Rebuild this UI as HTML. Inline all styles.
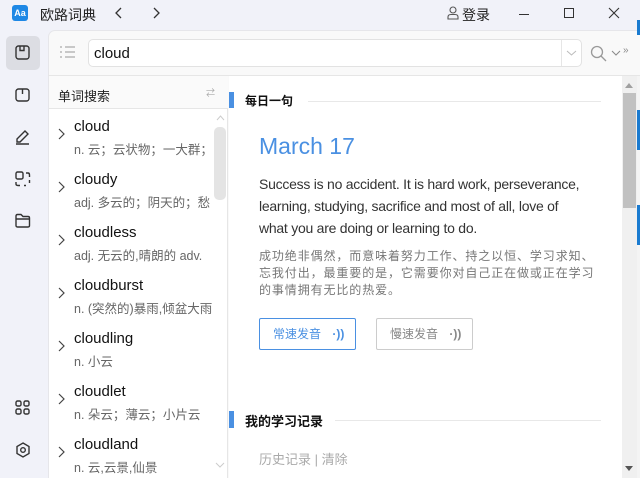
<!DOCTYPE html>
<html><head><meta charset="utf-8"><style>
*{margin:0;padding:0;box-sizing:border-box}
body{width:640px;height:478px;overflow:hidden;background:#f1f2f9;font-family:"Liberation Sans","Noto Sans CJK SC",sans-serif;position:relative;color:#222}
.a{position:absolute}
.t{white-space:nowrap}
svg{position:absolute;overflow:visible}
</style></head><body>
<div class="a" style="left:12px;top:5px;width:16px;height:16px;border-radius:3px;background:#1e88e5;color:#fff;font-size:9px;font-weight:bold;line-height:16px;text-align:center">Aa</div>
<div class="a t" style="left:40px;top:5px;font-size:14px;color:#222">欧路词典</div>
<svg style="left:114px;top:7px" width="10" height="12"><path d="M7 1L2 6L7 11" fill="none" stroke="#333" stroke-width="1.3"/></svg>
<svg style="left:152px;top:7px" width="10" height="12"><path d="M2 1L7 6L2 11" fill="none" stroke="#333" stroke-width="1.3"/></svg>
<svg style="left:447px;top:6px" width="12" height="14"><circle cx="6" cy="4" r="3" fill="none" stroke="#555" stroke-width="1.1"/><path d="M1 13V11Q1 8.5 4 8.5H8Q11 8.5 11 11V13Z" fill="none" stroke="#555" stroke-width="1.1"/></svg>
<div class="a t" style="left:462px;top:5px;font-size:14px;color:#222">登录</div>
<div class="a" style="left:519px;top:14px;width:10px;height:1px;background:#333"></div>
<div class="a" style="left:564px;top:8px;width:10px;height:10px;border:1px solid #333"></div>
<svg style="left:609px;top:8px" width="10" height="10"><path d="M0 0L10 10M10 0L0 10" stroke="#333" stroke-width="1.1"/></svg>
<div class="a" style="left:6px;top:36px;width:34px;height:34px;border-radius:5px;background:#dcdde3"></div>
<svg style="left:15px;top:45px" width="16" height="16" fill="none" stroke="#333" stroke-width="1.4"><rect x="1" y="1" width="13" height="13" rx="2.5"/><path d="M5 1V5.5H9V1"/></svg>
<svg style="left:15px;top:88px" width="16" height="16" fill="none" stroke="#333" stroke-width="1.4"><rect x="1" y="1" width="13" height="12" rx="2.5"/><path d="M7.5 1V6"/></svg>
<svg style="left:15px;top:129px" width="16" height="16" fill="none" stroke="#333" stroke-width="1.4"><path d="M2 10L10 2L13 5L5 13H2Z M1 15H14"/></svg>
<svg style="left:15px;top:171px" width="16" height="16" fill="none" stroke="#333" stroke-width="1.4"><rect x="1" y="1" width="7" height="7" rx="1.5"/><path d="M11 2H13Q14.5 2 14.5 4V6M1 11V13Q1 14.5 3 14.5H5M9 14.5H11M14.5 9V12"/></svg>
<svg style="left:15px;top:213px" width="16" height="16" fill="none" stroke="#333" stroke-width="1.4"><path d="M1 3Q1 1.5 2.5 1.5H6L8 3.5H13Q14.5 3.5 14.5 5V12.5Q14.5 14 13 14H2.5Q1 14 1 12.5Z M1 6H14.5"/></svg>
<svg style="left:15px;top:400px" width="16" height="16" fill="none" stroke="#333" stroke-width="1.4"><rect x="1" y="1" width="5" height="5" rx="1.5"/><rect x="9" y="1" width="5" height="5" rx="1.5"/><rect x="1" y="9" width="5" height="5" rx="1.5"/><rect x="9" y="9" width="5" height="5" rx="1.5"/></svg>
<svg style="left:15px;top:442px" width="16" height="16" fill="none" stroke="#333" stroke-width="1.4"><path d="M8 1L14 4.5V11.5L8 15L2 11.5V4.5Z"/><circle cx="8" cy="8" r="2.3"/></svg>
<div class="a" style="left:48px;top:30px;width:592px;height:448px;background:#f9f9f9;border-top-left-radius:7px;border-left:1px solid #e6e6ea;border-top:1px solid #e6e6ea"></div>
<svg style="left:60px;top:46px" width="16" height="14" stroke="#aaa" stroke-width="1.3"><path d="M0 1H2M0 6H2M0 11H2M5 1H15M5 6H15M5 11H15"/></svg>
<div class="a" style="left:88px;top:39px;width:494px;height:28px;background:#fff;border:1px solid #e2e2e2;border-radius:5px"></div>
<div class="a" style="left:561px;top:40px;width:1px;height:26px;background:#e6e6e6"></div>
<svg style="left:567px;top:51px" width="9" height="5"><path d="M0 0L4.5 4L9 0" fill="none" stroke="#bbb"/></svg>
<div class="a t" style="left:94px;top:45px;font-size:15px;color:#111">cloud</div>
<svg style="left:590px;top:45px" width="18" height="18" fill="none" stroke="#999" stroke-width="1.3"><circle cx="7" cy="7" r="5.5"/><path d="M11 11L16 16"/></svg>
<svg style="left:612px;top:51px" width="8" height="5"><path d="M0 0L4 4L8 0" fill="none" stroke="#888"/></svg>
<div class="a t" style="left:623px;top:45px;font-size:10px;color:#888">»</div>
<div class="a" style="left:48px;top:75px;width:592px;height:1px;background:#e6e6e6"></div>
<div class="a" style="left:49px;top:76px;width:179px;height:402px;background:#fff;border-right:1px solid #e6e6e6"></div>
<div class="a" style="left:49px;top:76px;width:179px;height:33px;background:#fafafa;border-bottom:1px solid #e6e6e6"></div>
<div class="a t" style="left:58px;top:86px;font-size:13px;color:#222">单词搜索</div>
<div class="a t" style="left:206px;top:86px;font-size:9px;color:#aaa">⇄</div>
<div class="a" style="left:214px;top:127px;width:12px;height:73px;background:#e4e4e4;border-radius:5px"></div>
<svg style="left:217px;top:116px" width="7" height="4"><path d="M0 4L3.5 0L7 4" fill="none" stroke="#ccc"/></svg>
<svg style="left:216px;top:463px" width="8" height="5"><path d="M0 0L4 4L8 0" fill="none" stroke="#ccc"/></svg>
<div id="list"></div>
<div class="a" style="left:229px;top:76px;width:394px;height:402px;background:#fff"></div>
<div class="a" style="left:229px;top:92px;width:5px;height:16px;background:#4a90e2"></div>
<div class="a t" style="left:245px;top:92px;font-size:12px;font-weight:bold;color:#111">每日一句</div>
<div class="a" style="left:308px;top:101px;width:293px;height:1px;background:#e8e8e8"></div>
<div class="a t" style="left:259px;top:133px;font-size:23px;color:#4a90e2">March 17</div>
<div class="a" style="left:259px;top:173px;width:350px;font-size:14px;letter-spacing:-0.25px;line-height:22px;color:#333">Success is no accident. It is hard work, perseverance,<br>learning, studying, sacrifice and most of all, love of<br>what you are doing or learning to do.</div>
<div class="a" style="left:259px;top:248px;width:350px;font-size:12px;letter-spacing:0.9px;line-height:17px;color:#777">成功绝非偶然，而意味着努力工作、持之以恒、学习求知、<br>忘我付出，最重要的是，它需要你对自己正在做或正在学习<br>的事情拥有无比的热爱。</div>
<div class="a t" style="left:259px;top:318px;width:97px;height:32px;border:1px solid #4a90e2;border-radius:2px;color:#4a90e2;font-size:12px;line-height:30px;padding-left:13px">常速发音 <span style="font-weight:bold;margin-left:8px">·))</span></div>
<div class="a t" style="left:376px;top:318px;width:97px;height:32px;border:1px solid #ccc;border-radius:2px;color:#888;font-size:12px;line-height:30px;padding-left:13px">慢速发音 <span style="font-weight:bold;margin-left:8px">·))</span></div>
<div class="a" style="left:229px;top:411px;width:5px;height:17px;background:#4a90e2"></div>
<div class="a t" style="left:245px;top:411px;font-size:13px;font-weight:bold;color:#111">我的学习记录</div>
<div class="a" style="left:335px;top:420px;width:266px;height:1px;background:#e8e8e8"></div>
<div class="a t" style="left:259px;top:449px;font-size:13px;color:#aaa">历史记录 | 清除</div>
<div class="a" style="left:622px;top:76px;width:15px;height:402px;background:#f0f0f0"></div>
<div class="a" style="left:623px;top:93px;width:13px;height:115px;background:#c1c1c1"></div>
<svg style="left:625px;top:83px" width="8" height="5"><path d="M0 5L4 0L8 5Z" fill="#a0a0a0"/></svg>
<svg style="left:625px;top:466px" width="8" height="5"><path d="M0 0L4 5L8 0Z" fill="#555"/></svg>
<div class="a" style="left:637px;top:76px;width:3px;height:402px;background:#f4f4f4"></div>
<div class="a" style="left:637px;top:20px;width:3px;height:15px;background:#1a7bd0"></div>
<div class="a" style="left:637px;top:110px;width:3px;height:40px;background:#1a7bd0"></div>
<div class="a" style="left:637px;top:205px;width:3px;height:40px;background:#1a7bd0"></div>
<script>
var w=[["cloud","n. 云；云状物；一大群；"],["cloudy","adj. 多云的；阴天的；愁"],["cloudless","adj. 无云的,晴朗的 adv."],["cloudburst","n. (突然的)暴雨,倾盆大雨"],["cloudling","n. 小云"],["cloudlet","n. 朵云；薄云；小片云"],["cloudland","n. 云,云景,仙景"]];
var h="";w.forEach(function(e,i){var y=118+i*53;
h+='<svg style="left:58px;top:'+(y+10)+'px" width="7" height="12"><path d="M1 1L6 6L1 11" fill="none" stroke="#444" stroke-width="1.2"/></svg>';
h+='<div class="a t" style="left:74px;top:'+y+'px;font-size:15px;color:#111">'+e[0]+'</div>';
h+='<div class="a t" style="left:74px;top:'+(y+21)+'px;width:138px;overflow:hidden;font-size:12.5px;color:#666">'+e[1]+'</div>';});
document.getElementById("list").innerHTML=h;
</script>
</body></html>
